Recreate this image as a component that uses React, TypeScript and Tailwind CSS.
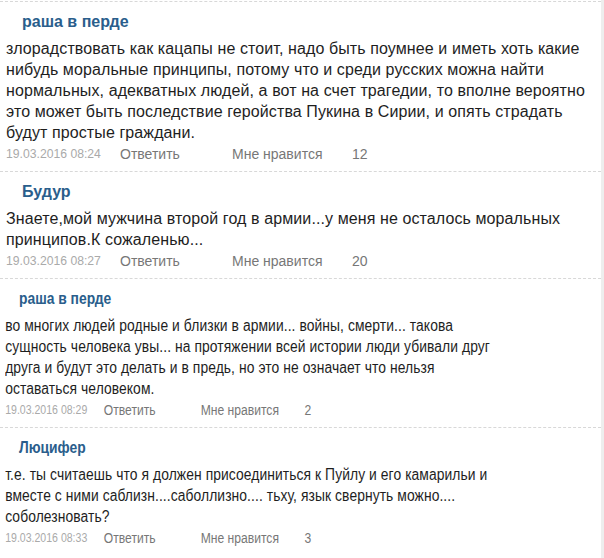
import React from "react";

type C = {
  name: string;
  lines: string[];
  date: string;
  likes: string;
  narrow?: boolean;
};

const comments: C[] = [
  {
    name: "раша в перде",
    lines: [
      "злорадствовать как кацапы не стоит, надо быть поумнее и иметь хоть какие",
      "нибудь моральные принципы, потому что и среди русских можна найти",
      "нормальных, адекватных людей, а вот на счет трагедии, то вполне вероятно",
      "это может быть последствие геройства Пукина в Сирии, и опять страдать",
      "будут простые граждани.",
    ],
    date: "19.03.2016 08:24",
    likes: "12",
  },
  {
    name: "Будур",
    lines: [
      "Знаете,мой мужчина второй год в армии...у меня не осталось моральных",
      "принципов.К сожаленью...",
    ],
    date: "19.03.2016 08:27",
    likes: "20",
  },
  {
    name: "раша в перде",
    lines: [
      "во многих людей родные и близки в армии... войны, смерти... такова",
      "сущность человека увы... на протяжении всей истории люди убивали друг",
      "друга и будут это делать и в предь, но это не означает что нельзя",
      "оставаться человеком.",
    ],
    date: "19.03.2016 08:29",
    likes: "2",
    narrow: true,
  },
  {
    name: "Люцифер",
    lines: [
      "т.е. ты считаешь что я должен присоединиться к Пуйлу и его камарильи и",
      "вместе с ними саблизн....саболлизно.... тьху, язык свернуть можно....",
      "соболезновать?",
    ],
    date: "19.03.2016 08:33",
    likes: "3",
    narrow: true,
  },
];

function Comment({ c }: { c: C }) {
  const inner = (
    <div className="pt-[10px] pb-[7px]">
      <div className="pl-[22px] h-[20px] text-[16px] leading-[20px] font-bold text-[#2a5e8c]">
        {c.name}
      </div>
      <div className="mt-[6px] pl-[6px] text-[16px] leading-[21px] tracking-[0.1px] text-[#1e1e1e]">
        {c.lines.map((l, i) => (
          <div key={i} className="whitespace-nowrap">
            {l}
          </div>
        ))}
      </div>
      <div className="mt-[1px] pl-[6px] h-[20px] flex items-center leading-[20px] overflow-hidden">
        <span className="w-[114px] text-[12.2px] text-[#aaaaaa]">{c.date}</span>
        <span className="w-[112px] text-[14px] text-[#777777]">Ответить</span>
        <span className="w-[120px] text-[14px] text-[#777777]">Мне нравится</span>
        <span className="text-[14px] text-[#777777]">{c.likes}</span>
      </div>
    </div>
  );
  return (
    <div className="border-t border-dashed border-[#d8d8d8]">
      {c.narrow ? (
        <div className="origin-left scale-x-[0.865]">{inner}</div>
      ) : (
        inner
      )}
    </div>
  );
}

export default function App() {
  return (
    <div
      className="w-[604px] h-[558px] bg-[#eeeeee] overflow-hidden"
      style={{ fontFamily: '"Liberation Sans", Arial, sans-serif' }}
    >
      <div className="w-[601px] h-[558px] bg-white pt-[1px]">
        {comments.map((c, i) => (
          <Comment key={i} c={c} />
        ))}
      </div>
    </div>
  );
}
